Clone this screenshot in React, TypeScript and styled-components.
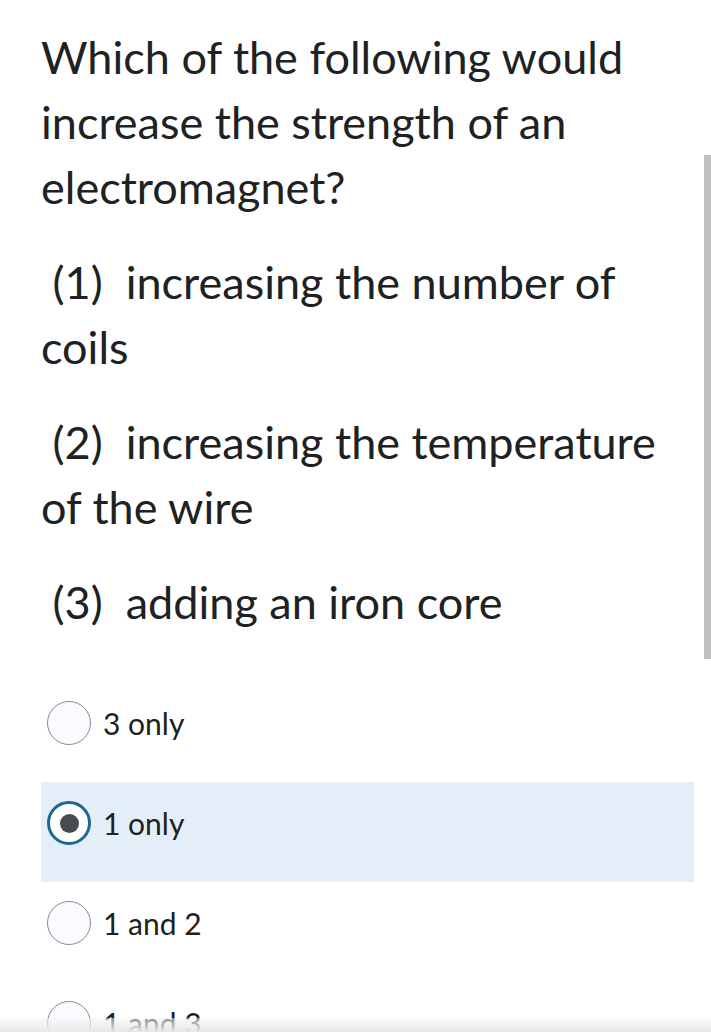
import React from "react";
import styled, { createGlobalStyle } from "styled-components";

const GlobalStyle = createGlobalStyle`
  html, body {
    margin: 0;
    padding: 0;
    background: #ffffff;
    overflow: hidden;
  }
  body {
    font-family: Lato, "Noto Sans", "Liberation Sans", sans-serif;
    color: #202122;
  }
`;

const Page = styled.div`
  height: 1032px;
  padding: 25px 17px 0 41px;
  box-sizing: border-box;
  overflow: hidden;
`;

const Paragraph = styled.p`
  margin: 0 0 30px 0;
  font-size: 45px;
  line-height: 65px;
  white-space: pre-wrap;
`;

const Choices = styled.div`
  display: flex;
  flex-direction: column;
  margin-top: 47px;
`;

const ChoiceRow = styled.label<{ $selected?: boolean }>`
  display: flex;
  align-items: flex-start;
  gap: 12px;
  height: 100px;
  box-sizing: border-box;
  padding: 19px 0 0 6px;
  background: ${(p) => (p.$selected ? "#e4eef9" : "transparent")};
`;

const Radio = styled.span<{ $checked?: boolean }>`
  flex: none;
  width: 44px;
  height: 44px;
  border-radius: 50%;
  box-sizing: border-box;
  display: flex;
  align-items: center;
  justify-content: center;
  background: ${(p) => (p.$checked ? "#ffffff" : "#f9fbff")};
  border: ${(p) => (p.$checked ? "3px solid #1b6b90" : "1px solid #868c8f")};

  &::after {
    content: "";
    display: ${(p) => (p.$checked ? "block" : "none")};
    width: 19px;
    height: 19px;
    border-radius: 50%;
    background: #494c4e;
  }
`;

const ChoiceText = styled.span`
  font-size: 30px;
  line-height: 44px;
`;

const ScrollThumb = styled.div`
  position: fixed;
  top: 155px;
  right: 0;
  width: 7px;
  height: 504px;
  background: #bfbfbf;
`;

const BottomShade = styled.div`
  position: fixed;
  left: 0;
  right: 0;
  bottom: 0;
  height: 14px;
  background: linear-gradient(to bottom, rgba(245, 245, 245, 0.5), #e8e8e8);
`;

const choices = [
  { label: "3 only", checked: false },
  { label: "1 only", checked: true },
  { label: "1 and 2", checked: false },
  { label: "1 and 3", checked: false },
];

export default function App() {
  return (
    <>
      <GlobalStyle />
      <Page>
        <Paragraph>Which of the following would increase the strength of an electromagnet?</Paragraph>
        <Paragraph>{" (1)  increasing the number of coils"}</Paragraph>
        <Paragraph>{" (2)  increasing the temperature of the wire"}</Paragraph>
        <Paragraph>{" (3)  adding an iron core"}</Paragraph>
        <Choices>
          {choices.map((c) => (
            <ChoiceRow key={c.label} $selected={c.checked}>
              <Radio $checked={c.checked} />
              <ChoiceText>{c.label}</ChoiceText>
            </ChoiceRow>
          ))}
        </Choices>
      </Page>
      <ScrollThumb />
      <BottomShade />
    </>
  );
}
